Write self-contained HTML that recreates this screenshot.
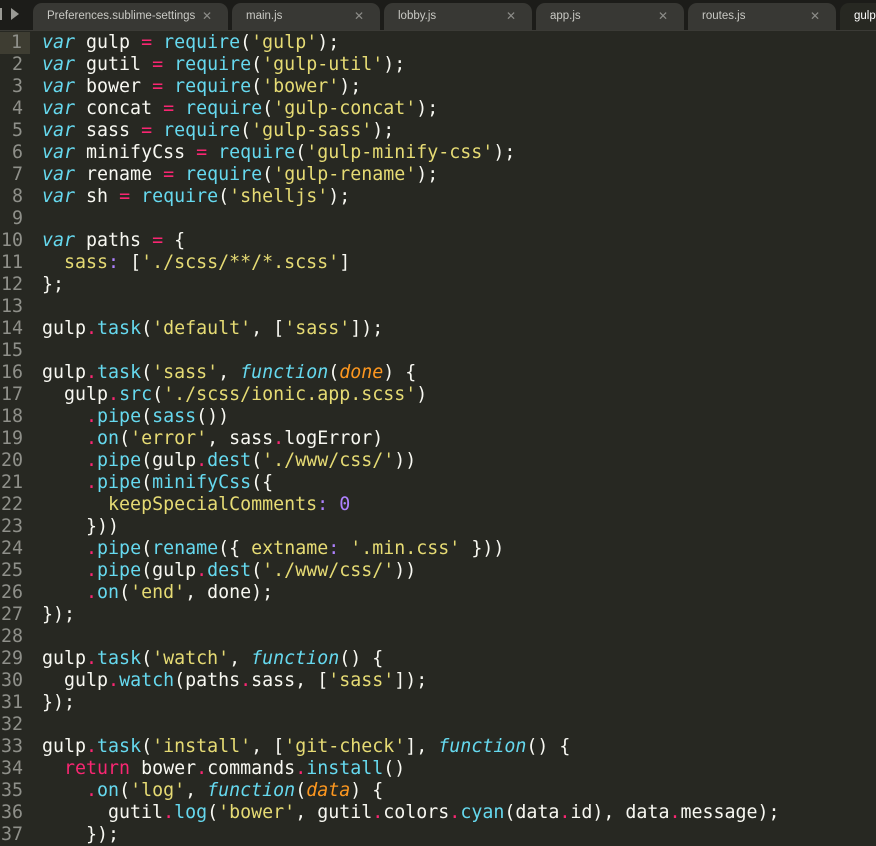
<!DOCTYPE html>
<html><head><meta charset="utf-8"><style>
html,body{margin:0;padding:0;width:876px;height:846px;overflow:hidden;background:#272822}
#tabs{position:absolute;left:0;top:0;width:876px;height:30px;background:#1c1c19;border-bottom:1px solid #3b3b36}
.tab{position:absolute;top:3px;height:27px;background:#383834;border-radius:9px 9px 0 0;font:11.5px "Liberation Sans",sans-serif;color:#c9c9c4;line-height:26px;box-sizing:border-box;padding-left:14px}
.tab.act{background:#272822;color:#fff}
.tab .x{position:absolute;right:16px;top:0;color:#8c8c88;font-size:12px}
#play{position:absolute;left:9px;top:8px;width:0;height:0;border-left:8px solid #9a9a95;border-top:6px solid transparent;border-bottom:6px solid transparent}
#bar{position:absolute;left:0;top:8px;width:2px;height:12px;background:#9a9a95}
#code{position:absolute;left:0;top:32px;width:876px;font-family:"DejaVu Sans Mono","Liberation Mono",monospace;font-size:18.3px;color:#f8f8f2}
.l{height:22px;line-height:22px;white-space:pre;position:relative}
.ln{position:absolute;left:0;width:23px;text-align:right;color:#8f908a}
.hl .ln{background:#3e3d32;width:33px;padding-right:10px;box-sizing:border-box;text-align:right}
.hl .ln{width:33px}
.c{position:absolute;left:42px}
.k{color:#66d9ef;font-style:italic}.p{color:#f92672}.f{color:#66d9ef}.s{color:#e6db74}.a{color:#fd971f;font-style:italic}.n{color:#ae81ff}.y{color:#e6db74}
</style></head><body>
<div id="tabs">
<div id="bar"></div><div id="play" style="left:11px"></div>
<div class="tab" style="left:33px;width:195px">Preferences.sublime-settings<span class="x">✕</span></div>
<div class="tab" style="left:232px;width:148px">main.js<span class="x">✕</span></div>
<div class="tab" style="left:384px;width:148px">lobby.js<span class="x">✕</span></div>
<div class="tab" style="left:536px;width:148px">app.js<span class="x">✕</span></div>
<div class="tab" style="left:688px;width:148px">routes.js<span class="x">✕</span></div>
<div class="tab act" style="left:840px;width:80px">gulpfile.js</div>
</div>
<div id="code">
<div class="l hl"><span class="ln" style="width:30px;padding-right:8px">1</span><span class="c"><span class="k">var</span> gulp <span class="p">=</span> <span class="f">require</span>(<span class="s">'gulp'</span>);</span></div>
<div class="l"><span class="ln">2</span><span class="c"><span class="k">var</span> gutil <span class="p">=</span> <span class="f">require</span>(<span class="s">'gulp-util'</span>);</span></div>
<div class="l"><span class="ln">3</span><span class="c"><span class="k">var</span> bower <span class="p">=</span> <span class="f">require</span>(<span class="s">'bower'</span>);</span></div>
<div class="l"><span class="ln">4</span><span class="c"><span class="k">var</span> concat <span class="p">=</span> <span class="f">require</span>(<span class="s">'gulp-concat'</span>);</span></div>
<div class="l"><span class="ln">5</span><span class="c"><span class="k">var</span> sass <span class="p">=</span> <span class="f">require</span>(<span class="s">'gulp-sass'</span>);</span></div>
<div class="l"><span class="ln">6</span><span class="c"><span class="k">var</span> minifyCss <span class="p">=</span> <span class="f">require</span>(<span class="s">'gulp-minify-css'</span>);</span></div>
<div class="l"><span class="ln">7</span><span class="c"><span class="k">var</span> rename <span class="p">=</span> <span class="f">require</span>(<span class="s">'gulp-rename'</span>);</span></div>
<div class="l"><span class="ln">8</span><span class="c"><span class="k">var</span> sh <span class="p">=</span> <span class="f">require</span>(<span class="s">'shelljs'</span>);</span></div>
<div class="l"><span class="ln">9</span></div>
<div class="l"><span class="ln">10</span><span class="c"><span class="k">var</span> paths <span class="p">=</span> {</span></div>
<div class="l"><span class="ln">11</span><span class="c">  <span class="y">sass</span><span class="n">:</span> [<span class="s">'./scss/**/*.scss'</span>]</span></div>
<div class="l"><span class="ln">12</span><span class="c">};</span></div>
<div class="l"><span class="ln">13</span></div>
<div class="l"><span class="ln">14</span><span class="c">gulp<span class="p">.</span><span class="f">task</span>(<span class="s">'default'</span>, [<span class="s">'sass'</span>]);</span></div>
<div class="l"><span class="ln">15</span></div>
<div class="l"><span class="ln">16</span><span class="c">gulp<span class="p">.</span><span class="f">task</span>(<span class="s">'sass'</span>, <span class="k">function</span>(<span class="a">done</span>) {</span></div>
<div class="l"><span class="ln">17</span><span class="c">  gulp<span class="p">.</span><span class="f">src</span>(<span class="s">'./scss/ionic.app.scss'</span>)</span></div>
<div class="l"><span class="ln">18</span><span class="c">    <span class="p">.</span><span class="f">pipe</span>(<span class="f">sass</span>())</span></div>
<div class="l"><span class="ln">19</span><span class="c">    <span class="p">.</span><span class="f">on</span>(<span class="s">'error'</span>, sass<span class="p">.</span>logError)</span></div>
<div class="l"><span class="ln">20</span><span class="c">    <span class="p">.</span><span class="f">pipe</span>(gulp<span class="p">.</span><span class="f">dest</span>(<span class="s">'./www/css/'</span>))</span></div>
<div class="l"><span class="ln">21</span><span class="c">    <span class="p">.</span><span class="f">pipe</span>(<span class="f">minifyCss</span>({</span></div>
<div class="l"><span class="ln">22</span><span class="c">      <span class="y">keepSpecialComments</span><span class="n">:</span> <span class="n">0</span></span></div>
<div class="l"><span class="ln">23</span><span class="c">    }))</span></div>
<div class="l"><span class="ln">24</span><span class="c">    <span class="p">.</span><span class="f">pipe</span>(<span class="f">rename</span>({ <span class="y">extname</span><span class="n">:</span> <span class="s">'.min.css'</span> }))</span></div>
<div class="l"><span class="ln">25</span><span class="c">    <span class="p">.</span><span class="f">pipe</span>(gulp<span class="p">.</span><span class="f">dest</span>(<span class="s">'./www/css/'</span>))</span></div>
<div class="l"><span class="ln">26</span><span class="c">    <span class="p">.</span><span class="f">on</span>(<span class="s">'end'</span>, done);</span></div>
<div class="l"><span class="ln">27</span><span class="c">});</span></div>
<div class="l"><span class="ln">28</span></div>
<div class="l"><span class="ln">29</span><span class="c">gulp<span class="p">.</span><span class="f">task</span>(<span class="s">'watch'</span>, <span class="k">function</span>() {</span></div>
<div class="l"><span class="ln">30</span><span class="c">  gulp<span class="p">.</span><span class="f">watch</span>(paths<span class="p">.</span>sass, [<span class="s">'sass'</span>]);</span></div>
<div class="l"><span class="ln">31</span><span class="c">});</span></div>
<div class="l"><span class="ln">32</span></div>
<div class="l"><span class="ln">33</span><span class="c">gulp<span class="p">.</span><span class="f">task</span>(<span class="s">'install'</span>, [<span class="s">'git-check'</span>], <span class="k">function</span>() {</span></div>
<div class="l"><span class="ln">34</span><span class="c">  <span class="p">return</span> bower<span class="p">.</span>commands<span class="p">.</span><span class="f">install</span>()</span></div>
<div class="l"><span class="ln">35</span><span class="c">    <span class="p">.</span><span class="f">on</span>(<span class="s">'log'</span>, <span class="k">function</span>(<span class="a">data</span>) {</span></div>
<div class="l"><span class="ln">36</span><span class="c">      gutil<span class="p">.</span><span class="f">log</span>(<span class="s">'bower'</span>, gutil<span class="p">.</span>colors<span class="p">.</span><span class="f">cyan</span>(data<span class="p">.</span>id), data<span class="p">.</span>message);</span></div>
<div class="l"><span class="ln">37</span><span class="c">    });</span></div>
</div>
</body></html>
